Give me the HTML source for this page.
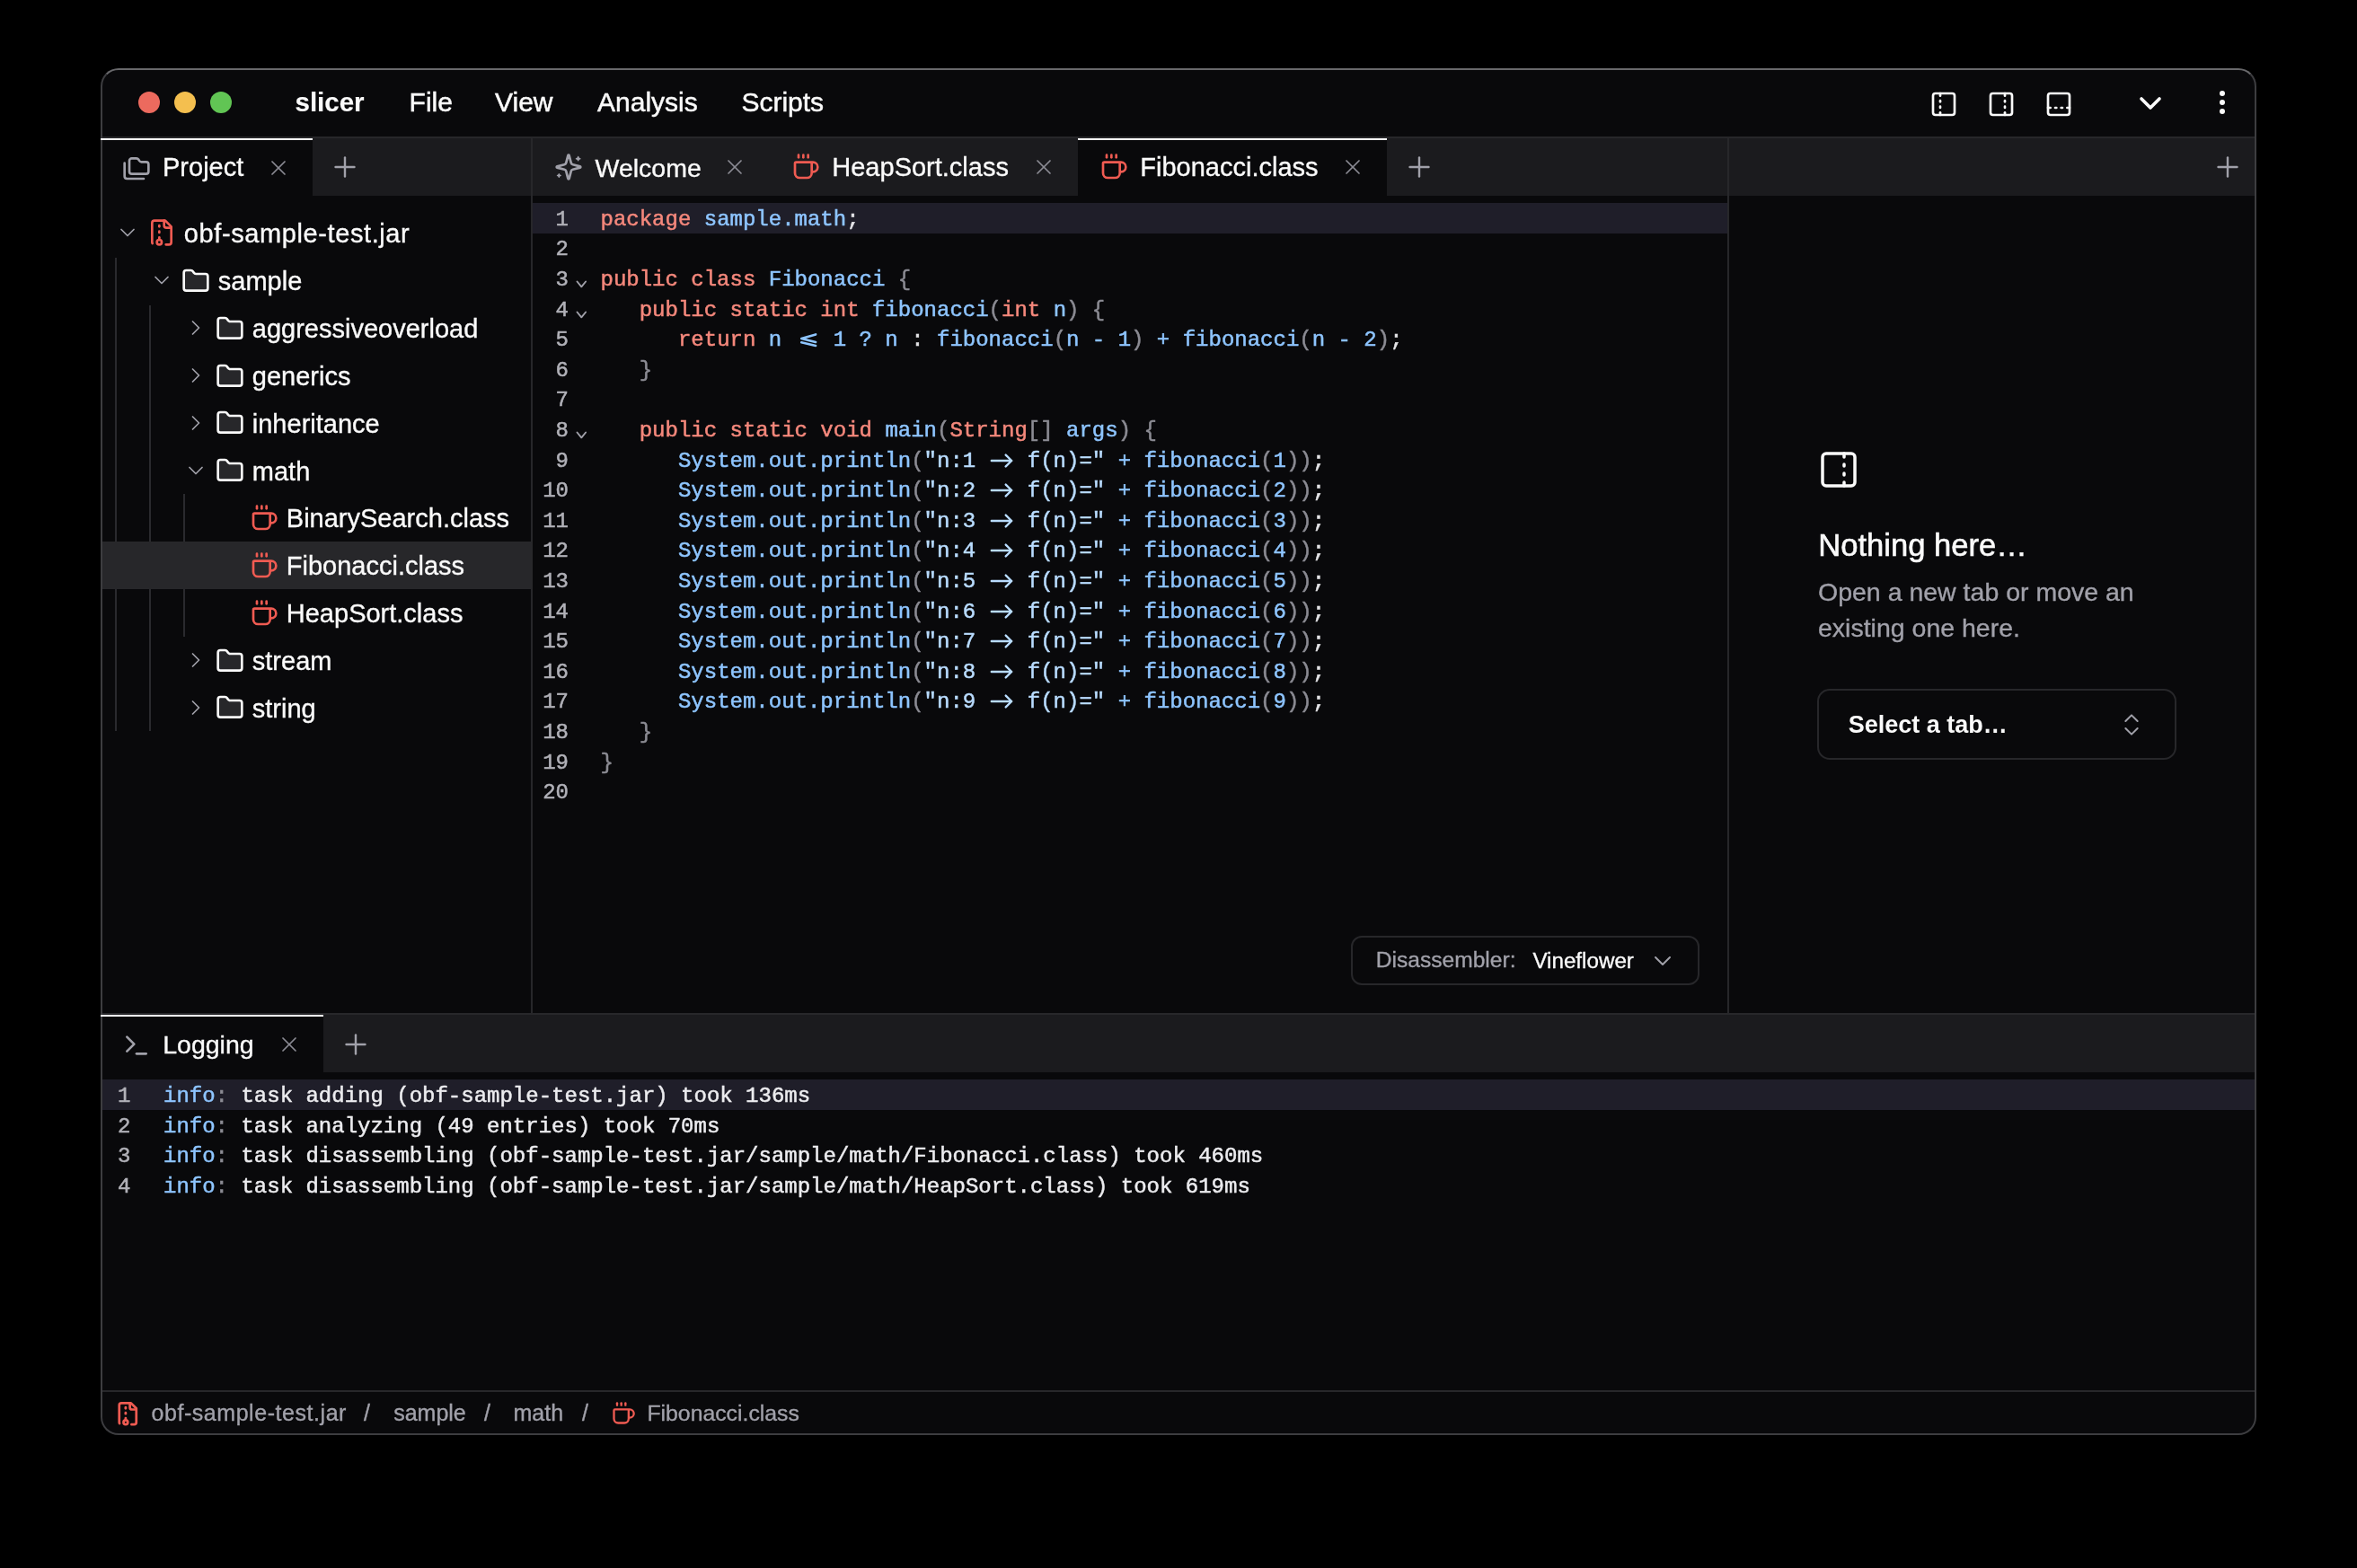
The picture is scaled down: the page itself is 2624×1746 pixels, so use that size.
<!DOCTYPE html><html><head><meta charset="utf-8"><title>slicer</title><style>
*{margin:0;padding:0}
html,body{width:2624px;height:1746px;background:#000;overflow:hidden}
body{position:relative;font-family:"Liberation Sans",sans-serif}
#root{position:absolute;left:0;top:0;width:2624px;height:1746px;will-change:transform}
.r,.t,.m,.ic{position:absolute}
.t{line-height:1;white-space:pre;-webkit-text-stroke-width:0.35px}
.m{font-family:"Liberation Mono",monospace;font-size:24px;line-height:33.6px;height:33.6px;white-space:pre;padding-top:1.8px;box-sizing:border-box;-webkit-text-stroke-width:0.5px}
.lig{display:inline-block;width:28.8px;text-align:center}
</style></head><body><div id="root"><div class="r" style="left:112px;top:76px;width:2400px;height:1522px;border-radius:20px;background:#09090b;box-sizing:border-box;border:2px solid #3d3d40;border-top-color:#68686b"></div><div class="r" style="left:154px;top:102px;width:24px;height:24px;background:#ec6a5e;border-radius:50%"></div><div class="r" style="left:194px;top:102px;width:24px;height:24px;background:#f4bf4f;border-radius:50%"></div><div class="r" style="left:234px;top:102px;width:24px;height:24px;background:#61c554;border-radius:50%"></div><div class="t" style="left:328.50px;top:99.33px;font-size:29.5px;color:#fafafa;font-weight:700;-webkit-text-stroke-width:0.15px">slicer</div><div class="t" style="left:455.60px;top:98.91px;font-size:30px;color:#fafafa;font-weight:400;-webkit-text-stroke:0.5px #fafafa">File</div><div class="t" style="left:551.00px;top:98.91px;font-size:30px;color:#fafafa;font-weight:400;-webkit-text-stroke:0.5px #fafafa">View</div><div class="t" style="left:665.00px;top:98.91px;font-size:30px;color:#fafafa;font-weight:400;-webkit-text-stroke:0.5px #fafafa">Analysis</div><div class="t" style="left:825.40px;top:98.91px;font-size:30px;color:#fafafa;font-weight:400;-webkit-text-stroke:0.5px #fafafa">Scripts</div><svg class="ic" style="left:2148.00px;top:99.80px;width:32px;height:32px;color:#fafafa" viewBox="0 0 24 24" fill="none" stroke="currentColor" stroke-width="2" stroke-linecap="round" stroke-linejoin="round"><rect width="18" height="18" x="3" y="3" rx="2"/><path d="M9 14v1"/><path d="M9 19v2"/><path d="M9 3v2"/><path d="M9 9v1"/></svg><svg class="ic" style="left:2211.90px;top:99.80px;width:32px;height:32px;color:#fafafa" viewBox="0 0 24 24" fill="none" stroke="currentColor" stroke-width="2" stroke-linecap="round" stroke-linejoin="round"><rect width="18" height="18" x="3" y="3" rx="2"/><path d="M15 14v1"/><path d="M15 19v2"/><path d="M15 3v2"/><path d="M15 9v1"/></svg><svg class="ic" style="left:2275.80px;top:99.80px;width:32px;height:32px;color:#fafafa" viewBox="0 0 24 24" fill="none" stroke="currentColor" stroke-width="2" stroke-linecap="round" stroke-linejoin="round"><rect width="18" height="18" x="3" y="3" rx="2"/><path d="M14 15h1"/><path d="M19 15h2"/><path d="M3 15h2"/><path d="M9 15h1"/></svg><svg class="ic" style="left:2373.80px;top:94.60px;width:40px;height:40px;color:#fafafa" viewBox="0 0 24 24" fill="none" stroke="currentColor" stroke-width="2.2" stroke-linecap="round" stroke-linejoin="round"><path d="m6 9 6 6 6-6"/></svg><div class="r" style="left:2470.75px;top:100.75px;width:6.5px;height:6.5px;background:#fafafa;border-radius:50%"></div><div class="r" style="left:2470.75px;top:110.75px;width:6.5px;height:6.5px;background:#fafafa;border-radius:50%"></div><div class="r" style="left:2470.75px;top:120.75px;width:6.5px;height:6.5px;background:#fafafa;border-radius:50%"></div><div class="r" style="left:114px;top:152px;width:2396px;height:2px;background:#27272a;"></div><div class="r" style="left:114px;top:154px;width:2396px;height:64px;background:#1b1b1e;"></div><div class="r" style="left:114px;top:1128px;width:2396px;height:2px;background:#27272a;"></div><div class="r" style="left:114px;top:1130px;width:2396px;height:64px;background:#1b1b1e;"></div><div class="r" style="left:114px;top:1548px;width:2396px;height:2px;background:#27272a;"></div><div class="r" style="left:114px;top:154px;width:234px;height:64px;background:#09090b;"></div><div class="r" style="left:112px;top:154px;width:236px;height:2px;background:#fafafa;"></div><div class="r" style="left:1200px;top:154px;width:344.4px;height:64px;background:#09090b;"></div><div class="r" style="left:1200px;top:154px;width:344.4px;height:2px;background:#fafafa;"></div><div class="r" style="left:114px;top:1130px;width:246px;height:64px;background:#09090b;"></div><div class="r" style="left:112px;top:1130px;width:248px;height:2px;background:#fafafa;"></div><div class="r" style="left:591px;top:152px;width:2px;height:976px;background:#27272a;"></div><div class="r" style="left:1923px;top:152px;width:2px;height:976px;background:#27272a;"></div><svg class="ic" style="left:135.95px;top:170.90px;width:32px;height:32px;color:#a1a1aa" viewBox="0 0 24 24" fill="none" stroke="currentColor" stroke-width="2" stroke-linecap="round" stroke-linejoin="round"><path d="M20 17a2 2 0 0 0 2-2V9a2 2 0 0 0-2-2h-3.9a2 2 0 0 1-1.69-.9l-.81-1.2a2 2 0 0 0-1.67-.9H8a2 2 0 0 0-2 2v9a2 2 0 0 0 2 2Z"/><path d="M2 8v11a2 2 0 0 0 2 2h14"/></svg><div class="t" style="left:181.00px;top:172.35px;font-size:29px;color:#fafafa;font-weight:400;">Project</div><svg class="ic" style="left:296.00px;top:172.70px;width:28px;height:28px;color:#8b8b93" viewBox="0 0 24 24" fill="none" stroke="currentColor" stroke-width="1.5" stroke-linecap="round" stroke-linejoin="round"><path d="M18 6 6 18"/><path d="m6 6 12 12"/></svg><svg class="ic" style="left:366.00px;top:168.00px;width:36px;height:36px;color:#a1a1aa" viewBox="0 0 24 24" fill="none" stroke="currentColor" stroke-width="1.6" stroke-linecap="round" stroke-linejoin="round"><path d="M5 12h14"/><path d="M12 5v14"/></svg><svg class="ic" style="left:617.10px;top:170.00px;width:32px;height:32px;color:#a1a1aa" viewBox="0 0 24 24" fill="none" stroke="currentColor" stroke-width="2" stroke-linecap="round" stroke-linejoin="round"><path d="M9.937 15.5A2 2 0 0 0 8.5 14.063l-6.135-1.582a.5.5 0 0 1 0-.962L8.5 9.936A2 2 0 0 0 9.937 8.5l1.582-6.135a.5.5 0 0 1 .963 0L14.063 8.5A2 2 0 0 0 15.5 9.937l6.135 1.581a.5.5 0 0 1 0 .964L15.5 14.063a2 2 0 0 0-1.437 1.437l-1.582 6.135a.5.5 0 0 1-.963 0z"/><path d="M20 3.2l.6 1.2 1.2.6-1.2.6-.6 1.2-.6-1.2-1.2-.6 1.2-.6z" fill="currentColor" stroke-width="0.8"/><path d="M4 17.6l.5 1 1 .5-1 .5-.5 1-.5-1-1-.5 1-.5z" fill="currentColor" stroke-width="0.8"/></svg><div class="t" style="left:662.50px;top:172.77px;font-size:28.5px;color:#fafafa;font-weight:400;">Welcome</div><svg class="ic" style="left:804.30px;top:172.00px;width:28px;height:28px;color:#8b8b93" viewBox="0 0 24 24" fill="none" stroke="currentColor" stroke-width="1.5" stroke-linecap="round" stroke-linejoin="round"><path d="M18 6 6 18"/><path d="m6 6 12 12"/></svg><svg class="ic" style="left:880.63px;top:170.17px;width:32px;height:32px;color:#ef5b52" viewBox="0 0 24 24" fill="none" stroke="currentColor" stroke-width="2" stroke-linecap="round" stroke-linejoin="round"><path d="M10 2v2"/><path d="M14 2v2"/><path d="M16 8a1 1 0 0 1 1 1v8a4 4 0 0 1-4 4H7a4 4 0 0 1-4-4V9a1 1 0 0 1 1-1h14a4 4 0 1 1 0 8h-1"/><path d="M6 2v2"/></svg><div class="t" style="left:926.30px;top:171.95px;font-size:29px;color:#fafafa;font-weight:400;">HeapSort.class</div><svg class="ic" style="left:1148.00px;top:171.70px;width:28px;height:28px;color:#8b8b93" viewBox="0 0 24 24" fill="none" stroke="currentColor" stroke-width="1.5" stroke-linecap="round" stroke-linejoin="round"><path d="M18 6 6 18"/><path d="m6 6 12 12"/></svg><svg class="ic" style="left:1223.73px;top:170.17px;width:32px;height:32px;color:#ef5b52" viewBox="0 0 24 24" fill="none" stroke="currentColor" stroke-width="2" stroke-linecap="round" stroke-linejoin="round"><path d="M10 2v2"/><path d="M14 2v2"/><path d="M16 8a1 1 0 0 1 1 1v8a4 4 0 0 1-4 4H7a4 4 0 0 1-4-4V9a1 1 0 0 1 1-1h14a4 4 0 1 1 0 8h-1"/><path d="M6 2v2"/></svg><div class="t" style="left:1269.30px;top:171.95px;font-size:29px;color:#fafafa;font-weight:400;">Fibonacci.class</div><svg class="ic" style="left:1492.00px;top:172.00px;width:28px;height:28px;color:#8b8b93" viewBox="0 0 24 24" fill="none" stroke="currentColor" stroke-width="1.5" stroke-linecap="round" stroke-linejoin="round"><path d="M18 6 6 18"/><path d="m6 6 12 12"/></svg><svg class="ic" style="left:1562.00px;top:168.00px;width:36px;height:36px;color:#a1a1aa" viewBox="0 0 24 24" fill="none" stroke="currentColor" stroke-width="1.6" stroke-linecap="round" stroke-linejoin="round"><path d="M5 12h14"/><path d="M12 5v14"/></svg><svg class="ic" style="left:2462.00px;top:168.00px;width:36px;height:36px;color:#a1a1aa" viewBox="0 0 24 24" fill="none" stroke="currentColor" stroke-width="1.6" stroke-linecap="round" stroke-linejoin="round"><path d="M5 12h14"/><path d="M12 5v14"/></svg><div class="r" style="left:127.6px;top:286.84000000000003px;width:2px;height:527.4px;background:#2a2a2e;"></div><div class="r" style="left:166px;top:339.68px;width:2px;height:474.56px;background:#2a2a2e;"></div><div class="r" style="left:204.2px;top:550.04px;width:2px;height:52.84000000000003px;background:#2a2a2e;"></div><div class="r" style="left:204.2px;top:655.72px;width:2px;height:52.84000000000003px;background:#2a2a2e;"></div><div class="r" style="left:114px;top:602.88px;width:477px;height:52.84px;background:#27272a;"></div><svg class="ic" style="left:128.00px;top:245.42px;width:28px;height:28px;color:#a1a1aa" viewBox="0 0 24 24" fill="none" stroke="currentColor" stroke-width="1.5" stroke-linecap="round" stroke-linejoin="round"><path d="m6 9 6 6 6-6"/></svg><svg class="ic" style="left:164.00px;top:243.42px;width:32px;height:32px;color:#ef5b52" viewBox="0 0 24 24" fill="none" stroke="currentColor" stroke-width="2" stroke-linecap="round" stroke-linejoin="round"><path d="M10 12v-1"/><path d="M10 18v-2"/><path d="M10 7V6"/><path d="M14 2v4a2 2 0 0 0 2 2h4"/><path d="M15.5 22H18a2 2 0 0 0 2-2V7l-5-5H6a2 2 0 0 0-2 2v16a2 2 0 0 0 .274 1.01"/><circle cx="10" cy="20" r="2"/></svg><div class="t" style="left:204.80px;top:246.45px;font-size:29px;color:#fafafa;font-weight:400;letter-spacing:0.6px">obf-sample-test.jar</div><svg class="ic" style="left:166.00px;top:298.26px;width:28px;height:28px;color:#a1a1aa" viewBox="0 0 24 24" fill="none" stroke="currentColor" stroke-width="1.5" stroke-linecap="round" stroke-linejoin="round"><path d="m6 9 6 6 6-6"/></svg><svg class="ic" style="left:201.95px;top:296.93px;width:32px;height:32px;color:#fafafa" viewBox="0 0 24 24" fill="none" stroke="currentColor" stroke-width="2" stroke-linecap="round" stroke-linejoin="round"><path fill="#27272a" d="M20 20a2 2 0 0 0 2-2V8a2 2 0 0 0-2-2h-7.9a2 2 0 0 1-1.69-.9L9.6 3.9A2 2 0 0 0 7.93 3H4a2 2 0 0 0-2 2v13a2 2 0 0 0 2 2Z"/></svg><div class="t" style="left:242.80px;top:299.29px;font-size:29px;color:#fafafa;font-weight:400;">sample</div><svg class="ic" style="left:204.00px;top:351.10px;width:28px;height:28px;color:#a1a1aa" viewBox="0 0 24 24" fill="none" stroke="currentColor" stroke-width="1.5" stroke-linecap="round" stroke-linejoin="round"><path d="m9 18 6-6-6-6"/></svg><svg class="ic" style="left:239.95px;top:349.77px;width:32px;height:32px;color:#fafafa" viewBox="0 0 24 24" fill="none" stroke="currentColor" stroke-width="2" stroke-linecap="round" stroke-linejoin="round"><path fill="#27272a" d="M20 20a2 2 0 0 0 2-2V8a2 2 0 0 0-2-2h-7.9a2 2 0 0 1-1.69-.9L9.6 3.9A2 2 0 0 0 7.93 3H4a2 2 0 0 0-2 2v13a2 2 0 0 0 2 2Z"/></svg><div class="t" style="left:280.80px;top:352.13px;font-size:29px;color:#fafafa;font-weight:400;">aggressiveoverload</div><svg class="ic" style="left:204.00px;top:403.94px;width:28px;height:28px;color:#a1a1aa" viewBox="0 0 24 24" fill="none" stroke="currentColor" stroke-width="1.5" stroke-linecap="round" stroke-linejoin="round"><path d="m9 18 6-6-6-6"/></svg><svg class="ic" style="left:239.95px;top:402.61px;width:32px;height:32px;color:#fafafa" viewBox="0 0 24 24" fill="none" stroke="currentColor" stroke-width="2" stroke-linecap="round" stroke-linejoin="round"><path fill="#27272a" d="M20 20a2 2 0 0 0 2-2V8a2 2 0 0 0-2-2h-7.9a2 2 0 0 1-1.69-.9L9.6 3.9A2 2 0 0 0 7.93 3H4a2 2 0 0 0-2 2v13a2 2 0 0 0 2 2Z"/></svg><div class="t" style="left:280.80px;top:404.97px;font-size:29px;color:#fafafa;font-weight:400;">generics</div><svg class="ic" style="left:204.00px;top:456.78px;width:28px;height:28px;color:#a1a1aa" viewBox="0 0 24 24" fill="none" stroke="currentColor" stroke-width="1.5" stroke-linecap="round" stroke-linejoin="round"><path d="m9 18 6-6-6-6"/></svg><svg class="ic" style="left:239.95px;top:455.45px;width:32px;height:32px;color:#fafafa" viewBox="0 0 24 24" fill="none" stroke="currentColor" stroke-width="2" stroke-linecap="round" stroke-linejoin="round"><path fill="#27272a" d="M20 20a2 2 0 0 0 2-2V8a2 2 0 0 0-2-2h-7.9a2 2 0 0 1-1.69-.9L9.6 3.9A2 2 0 0 0 7.93 3H4a2 2 0 0 0-2 2v13a2 2 0 0 0 2 2Z"/></svg><div class="t" style="left:280.80px;top:457.81px;font-size:29px;color:#fafafa;font-weight:400;">inheritance</div><svg class="ic" style="left:204.00px;top:509.62px;width:28px;height:28px;color:#a1a1aa" viewBox="0 0 24 24" fill="none" stroke="currentColor" stroke-width="1.5" stroke-linecap="round" stroke-linejoin="round"><path d="m6 9 6 6 6-6"/></svg><svg class="ic" style="left:239.95px;top:508.29px;width:32px;height:32px;color:#fafafa" viewBox="0 0 24 24" fill="none" stroke="currentColor" stroke-width="2" stroke-linecap="round" stroke-linejoin="round"><path fill="#27272a" d="M20 20a2 2 0 0 0 2-2V8a2 2 0 0 0-2-2h-7.9a2 2 0 0 1-1.69-.9L9.6 3.9A2 2 0 0 0 7.93 3H4a2 2 0 0 0-2 2v13a2 2 0 0 0 2 2Z"/></svg><div class="t" style="left:280.80px;top:510.65px;font-size:29px;color:#fafafa;font-weight:400;">math</div><svg class="ic" style="left:278.33px;top:561.13px;width:32px;height:32px;color:#ef5b52" viewBox="0 0 24 24" fill="none" stroke="currentColor" stroke-width="2" stroke-linecap="round" stroke-linejoin="round"><path d="M10 2v2"/><path d="M14 2v2"/><path d="M16 8a1 1 0 0 1 1 1v8a4 4 0 0 1-4 4H7a4 4 0 0 1-4-4V9a1 1 0 0 1 1-1h14a4 4 0 1 1 0 8h-1"/><path d="M6 2v2"/></svg><div class="t" style="left:318.80px;top:563.49px;font-size:29px;color:#fafafa;font-weight:400;">BinarySearch.class</div><svg class="ic" style="left:278.33px;top:613.97px;width:32px;height:32px;color:#ef5b52" viewBox="0 0 24 24" fill="none" stroke="currentColor" stroke-width="2" stroke-linecap="round" stroke-linejoin="round"><path d="M10 2v2"/><path d="M14 2v2"/><path d="M16 8a1 1 0 0 1 1 1v8a4 4 0 0 1-4 4H7a4 4 0 0 1-4-4V9a1 1 0 0 1 1-1h14a4 4 0 1 1 0 8h-1"/><path d="M6 2v2"/></svg><div class="t" style="left:318.80px;top:616.33px;font-size:29px;color:#fafafa;font-weight:400;">Fibonacci.class</div><svg class="ic" style="left:278.33px;top:666.81px;width:32px;height:32px;color:#ef5b52" viewBox="0 0 24 24" fill="none" stroke="currentColor" stroke-width="2" stroke-linecap="round" stroke-linejoin="round"><path d="M10 2v2"/><path d="M14 2v2"/><path d="M16 8a1 1 0 0 1 1 1v8a4 4 0 0 1-4 4H7a4 4 0 0 1-4-4V9a1 1 0 0 1 1-1h14a4 4 0 1 1 0 8h-1"/><path d="M6 2v2"/></svg><div class="t" style="left:318.80px;top:669.17px;font-size:29px;color:#fafafa;font-weight:400;">HeapSort.class</div><svg class="ic" style="left:204.00px;top:720.98px;width:28px;height:28px;color:#a1a1aa" viewBox="0 0 24 24" fill="none" stroke="currentColor" stroke-width="1.5" stroke-linecap="round" stroke-linejoin="round"><path d="m9 18 6-6-6-6"/></svg><svg class="ic" style="left:239.95px;top:719.65px;width:32px;height:32px;color:#fafafa" viewBox="0 0 24 24" fill="none" stroke="currentColor" stroke-width="2" stroke-linecap="round" stroke-linejoin="round"><path fill="#27272a" d="M20 20a2 2 0 0 0 2-2V8a2 2 0 0 0-2-2h-7.9a2 2 0 0 1-1.69-.9L9.6 3.9A2 2 0 0 0 7.93 3H4a2 2 0 0 0-2 2v13a2 2 0 0 0 2 2Z"/></svg><div class="t" style="left:280.80px;top:722.01px;font-size:29px;color:#fafafa;font-weight:400;">stream</div><svg class="ic" style="left:204.00px;top:773.82px;width:28px;height:28px;color:#a1a1aa" viewBox="0 0 24 24" fill="none" stroke="currentColor" stroke-width="1.5" stroke-linecap="round" stroke-linejoin="round"><path d="m9 18 6-6-6-6"/></svg><svg class="ic" style="left:239.95px;top:772.49px;width:32px;height:32px;color:#fafafa" viewBox="0 0 24 24" fill="none" stroke="currentColor" stroke-width="2" stroke-linecap="round" stroke-linejoin="round"><path fill="#27272a" d="M20 20a2 2 0 0 0 2-2V8a2 2 0 0 0-2-2h-7.9a2 2 0 0 1-1.69-.9L9.6 3.9A2 2 0 0 0 7.93 3H4a2 2 0 0 0-2 2v13a2 2 0 0 0 2 2Z"/></svg><div class="t" style="left:280.80px;top:774.85px;font-size:29px;color:#fafafa;font-weight:400;">string</div><div class="r" style="left:593px;top:226px;width:1330px;height:33.6px;background:#1f1e29;"></div><div class="m" style="left:560px;top:226.00px;width:73px;text-align:right;color:#b1b1b8">1</div><div class="m" style="left:668.5px;top:226.00px"><span style="color:#f5887c">package</span> <span style="color:#8ec5ff">sample.math</span><span style="color:#e4e4e7">;</span></div><div class="m" style="left:560px;top:259.60px;width:73px;text-align:right;color:#b1b1b8">2</div><div class="m" style="left:560px;top:293.20px;width:73px;text-align:right;color:#b1b1b8">3</div><div class="m" style="left:668.5px;top:293.20px"><span style="color:#f5887c">public class</span> <span style="color:#8ec5ff">Fibonacci</span> <span style="color:#8b8b93">{</span></div><div class="m" style="left:560px;top:326.80px;width:73px;text-align:right;color:#b1b1b8">4</div><div class="m" style="left:668.5px;top:326.80px">   <span style="color:#f5887c">public static int</span> <span style="color:#8ec5ff">fibonacci</span><span style="color:#8b8b93">(</span><span style="color:#f5887c">int</span> <span style="color:#8ec5ff">n</span><span style="color:#8b8b93">)</span> <span style="color:#8b8b93">{</span></div><div class="m" style="left:560px;top:360.40px;width:73px;text-align:right;color:#b1b1b8">5</div><div class="m" style="left:668.5px;top:360.40px">      <span style="color:#f5887c">return</span> <span style="color:#8ec5ff">n <span class="lig"><svg width="28.8" height="20" viewBox="0 0 28.8 20" style="vertical-align:-2px"><path d="M23.1 5.4 7.2 9.9 23.1 13.9M7.2 14.2 23.1 18" fill="none" stroke="currentColor" stroke-width="2.6" stroke-linecap="round" stroke-linejoin="round"/></svg></span> 1 ? n</span> <span style="color:#e4e4e7">:</span> <span style="color:#8ec5ff">fibonacci</span><span style="color:#8b8b93">(</span><span style="color:#8ec5ff">n - 1</span><span style="color:#8b8b93">)</span> <span style="color:#8ec5ff">+</span> <span style="color:#8ec5ff">fibonacci</span><span style="color:#8b8b93">(</span><span style="color:#8ec5ff">n - 2</span><span style="color:#8b8b93">)</span><span style="color:#e4e4e7">;</span></div><div class="m" style="left:560px;top:394.00px;width:73px;text-align:right;color:#b1b1b8">6</div><div class="m" style="left:668.5px;top:394.00px">   <span style="color:#8b8b93">}</span></div><div class="m" style="left:560px;top:427.60px;width:73px;text-align:right;color:#b1b1b8">7</div><div class="m" style="left:560px;top:461.20px;width:73px;text-align:right;color:#b1b1b8">8</div><div class="m" style="left:668.5px;top:461.20px">   <span style="color:#f5887c">public static void</span> <span style="color:#8ec5ff">main</span><span style="color:#8b8b93">(</span><span style="color:#f5887c">String</span><span style="color:#8b8b93">[]</span> <span style="color:#8ec5ff">args</span><span style="color:#8b8b93">)</span> <span style="color:#8b8b93">{</span></div><div class="m" style="left:560px;top:494.80px;width:73px;text-align:right;color:#b1b1b8">9</div><div class="m" style="left:668.5px;top:494.80px">      <span style="color:#8ec5ff">System.out.println</span><span style="color:#8b8b93">(</span><span style="color:#b9dcff">"n:1 <span class="lig"><svg width="28.8" height="20" viewBox="0 0 28.8 20" style="vertical-align:-3px"><path d="M2.8 10h22.4M18.7 3.6 25.2 10l-6.5 6.4" fill="none" stroke="currentColor" stroke-width="2.4" stroke-linecap="round" stroke-linejoin="round"/></svg></span> f(n)="</span> <span style="color:#8ec5ff">+</span> <span style="color:#8ec5ff">fibonacci</span><span style="color:#8b8b93">(</span><span style="color:#8ec5ff">1</span><span style="color:#8b8b93">))</span><span style="color:#e4e4e7">;</span></div><div class="m" style="left:560px;top:528.40px;width:73px;text-align:right;color:#b1b1b8">10</div><div class="m" style="left:668.5px;top:528.40px">      <span style="color:#8ec5ff">System.out.println</span><span style="color:#8b8b93">(</span><span style="color:#b9dcff">"n:2 <span class="lig"><svg width="28.8" height="20" viewBox="0 0 28.8 20" style="vertical-align:-3px"><path d="M2.8 10h22.4M18.7 3.6 25.2 10l-6.5 6.4" fill="none" stroke="currentColor" stroke-width="2.4" stroke-linecap="round" stroke-linejoin="round"/></svg></span> f(n)="</span> <span style="color:#8ec5ff">+</span> <span style="color:#8ec5ff">fibonacci</span><span style="color:#8b8b93">(</span><span style="color:#8ec5ff">2</span><span style="color:#8b8b93">))</span><span style="color:#e4e4e7">;</span></div><div class="m" style="left:560px;top:562.00px;width:73px;text-align:right;color:#b1b1b8">11</div><div class="m" style="left:668.5px;top:562.00px">      <span style="color:#8ec5ff">System.out.println</span><span style="color:#8b8b93">(</span><span style="color:#b9dcff">"n:3 <span class="lig"><svg width="28.8" height="20" viewBox="0 0 28.8 20" style="vertical-align:-3px"><path d="M2.8 10h22.4M18.7 3.6 25.2 10l-6.5 6.4" fill="none" stroke="currentColor" stroke-width="2.4" stroke-linecap="round" stroke-linejoin="round"/></svg></span> f(n)="</span> <span style="color:#8ec5ff">+</span> <span style="color:#8ec5ff">fibonacci</span><span style="color:#8b8b93">(</span><span style="color:#8ec5ff">3</span><span style="color:#8b8b93">))</span><span style="color:#e4e4e7">;</span></div><div class="m" style="left:560px;top:595.60px;width:73px;text-align:right;color:#b1b1b8">12</div><div class="m" style="left:668.5px;top:595.60px">      <span style="color:#8ec5ff">System.out.println</span><span style="color:#8b8b93">(</span><span style="color:#b9dcff">"n:4 <span class="lig"><svg width="28.8" height="20" viewBox="0 0 28.8 20" style="vertical-align:-3px"><path d="M2.8 10h22.4M18.7 3.6 25.2 10l-6.5 6.4" fill="none" stroke="currentColor" stroke-width="2.4" stroke-linecap="round" stroke-linejoin="round"/></svg></span> f(n)="</span> <span style="color:#8ec5ff">+</span> <span style="color:#8ec5ff">fibonacci</span><span style="color:#8b8b93">(</span><span style="color:#8ec5ff">4</span><span style="color:#8b8b93">))</span><span style="color:#e4e4e7">;</span></div><div class="m" style="left:560px;top:629.20px;width:73px;text-align:right;color:#b1b1b8">13</div><div class="m" style="left:668.5px;top:629.20px">      <span style="color:#8ec5ff">System.out.println</span><span style="color:#8b8b93">(</span><span style="color:#b9dcff">"n:5 <span class="lig"><svg width="28.8" height="20" viewBox="0 0 28.8 20" style="vertical-align:-3px"><path d="M2.8 10h22.4M18.7 3.6 25.2 10l-6.5 6.4" fill="none" stroke="currentColor" stroke-width="2.4" stroke-linecap="round" stroke-linejoin="round"/></svg></span> f(n)="</span> <span style="color:#8ec5ff">+</span> <span style="color:#8ec5ff">fibonacci</span><span style="color:#8b8b93">(</span><span style="color:#8ec5ff">5</span><span style="color:#8b8b93">))</span><span style="color:#e4e4e7">;</span></div><div class="m" style="left:560px;top:662.80px;width:73px;text-align:right;color:#b1b1b8">14</div><div class="m" style="left:668.5px;top:662.80px">      <span style="color:#8ec5ff">System.out.println</span><span style="color:#8b8b93">(</span><span style="color:#b9dcff">"n:6 <span class="lig"><svg width="28.8" height="20" viewBox="0 0 28.8 20" style="vertical-align:-3px"><path d="M2.8 10h22.4M18.7 3.6 25.2 10l-6.5 6.4" fill="none" stroke="currentColor" stroke-width="2.4" stroke-linecap="round" stroke-linejoin="round"/></svg></span> f(n)="</span> <span style="color:#8ec5ff">+</span> <span style="color:#8ec5ff">fibonacci</span><span style="color:#8b8b93">(</span><span style="color:#8ec5ff">6</span><span style="color:#8b8b93">))</span><span style="color:#e4e4e7">;</span></div><div class="m" style="left:560px;top:696.40px;width:73px;text-align:right;color:#b1b1b8">15</div><div class="m" style="left:668.5px;top:696.40px">      <span style="color:#8ec5ff">System.out.println</span><span style="color:#8b8b93">(</span><span style="color:#b9dcff">"n:7 <span class="lig"><svg width="28.8" height="20" viewBox="0 0 28.8 20" style="vertical-align:-3px"><path d="M2.8 10h22.4M18.7 3.6 25.2 10l-6.5 6.4" fill="none" stroke="currentColor" stroke-width="2.4" stroke-linecap="round" stroke-linejoin="round"/></svg></span> f(n)="</span> <span style="color:#8ec5ff">+</span> <span style="color:#8ec5ff">fibonacci</span><span style="color:#8b8b93">(</span><span style="color:#8ec5ff">7</span><span style="color:#8b8b93">))</span><span style="color:#e4e4e7">;</span></div><div class="m" style="left:560px;top:730.00px;width:73px;text-align:right;color:#b1b1b8">16</div><div class="m" style="left:668.5px;top:730.00px">      <span style="color:#8ec5ff">System.out.println</span><span style="color:#8b8b93">(</span><span style="color:#b9dcff">"n:8 <span class="lig"><svg width="28.8" height="20" viewBox="0 0 28.8 20" style="vertical-align:-3px"><path d="M2.8 10h22.4M18.7 3.6 25.2 10l-6.5 6.4" fill="none" stroke="currentColor" stroke-width="2.4" stroke-linecap="round" stroke-linejoin="round"/></svg></span> f(n)="</span> <span style="color:#8ec5ff">+</span> <span style="color:#8ec5ff">fibonacci</span><span style="color:#8b8b93">(</span><span style="color:#8ec5ff">8</span><span style="color:#8b8b93">))</span><span style="color:#e4e4e7">;</span></div><div class="m" style="left:560px;top:763.60px;width:73px;text-align:right;color:#b1b1b8">17</div><div class="m" style="left:668.5px;top:763.60px">      <span style="color:#8ec5ff">System.out.println</span><span style="color:#8b8b93">(</span><span style="color:#b9dcff">"n:9 <span class="lig"><svg width="28.8" height="20" viewBox="0 0 28.8 20" style="vertical-align:-3px"><path d="M2.8 10h22.4M18.7 3.6 25.2 10l-6.5 6.4" fill="none" stroke="currentColor" stroke-width="2.4" stroke-linecap="round" stroke-linejoin="round"/></svg></span> f(n)="</span> <span style="color:#8ec5ff">+</span> <span style="color:#8ec5ff">fibonacci</span><span style="color:#8b8b93">(</span><span style="color:#8ec5ff">9</span><span style="color:#8b8b93">))</span><span style="color:#e4e4e7">;</span></div><div class="m" style="left:560px;top:797.20px;width:73px;text-align:right;color:#b1b1b8">18</div><div class="m" style="left:668.5px;top:797.20px">   <span style="color:#8b8b93">}</span></div><div class="m" style="left:560px;top:830.80px;width:73px;text-align:right;color:#b1b1b8">19</div><div class="m" style="left:668.5px;top:830.80px"><span style="color:#8b8b93">}</span></div><div class="m" style="left:560px;top:864.40px;width:73px;text-align:right;color:#b1b1b8">20</div><svg class="ic" style="left:640px;top:310.20px;width:15px;height:12px" viewBox="0 0 15 12"><path d="M2.5 3.5 7.3 9.3 12.1 3.5" fill="none" stroke="#a1a1aa" stroke-width="1.9" stroke-linecap="round" stroke-linejoin="round"/></svg><svg class="ic" style="left:640px;top:343.80px;width:15px;height:12px" viewBox="0 0 15 12"><path d="M2.5 3.5 7.3 9.3 12.1 3.5" fill="none" stroke="#a1a1aa" stroke-width="1.9" stroke-linecap="round" stroke-linejoin="round"/></svg><svg class="ic" style="left:640px;top:478.20px;width:15px;height:12px" viewBox="0 0 15 12"><path d="M2.5 3.5 7.3 9.3 12.1 3.5" fill="none" stroke="#a1a1aa" stroke-width="1.9" stroke-linecap="round" stroke-linejoin="round"/></svg><div class="r" style="left:1504.4px;top:1042.4px;width:388px;height:55.1px;box-sizing:border-box;border:2px solid #27272a;border-radius:12px;background:#09090b"></div><div class="t" style="left:1531.70px;top:1057.18px;font-size:24.6px;color:#a1a1aa;font-weight:400;">Disassembler:</div><div class="t" style="left:1706.40px;top:1057.51px;font-size:24.2px;color:#fafafa;font-weight:400;">Vineflower</div><svg class="ic" style="left:1835.00px;top:1054.00px;width:32px;height:32px;color:#a1a1aa" viewBox="0 0 24 24" fill="none" stroke="currentColor" stroke-width="1.5" stroke-linecap="round" stroke-linejoin="round"><path d="m6 9 6 6 6-6"/></svg><svg class="ic" style="left:2023.10px;top:498.90px;width:48px;height:48px;color:#fafafa" viewBox="0 0 24 24" fill="none" stroke="currentColor" stroke-width="1.75" stroke-linecap="round" stroke-linejoin="round"><rect width="18" height="18" x="3" y="3" rx="2"/><path d="M15 14v1"/><path d="M15 19v2"/><path d="M15 3v2"/><path d="M15 9v1"/></svg><div class="t" style="left:2024.20px;top:590.01px;font-size:34.6px;color:#fafafa;font-weight:400;-webkit-text-stroke:0.6px #fafafa">Nothing here&#8230;</div><div class="t" style="left:2024.00px;top:645.47px;font-size:28.5px;color:#a1a1aa;font-weight:400;">Open a new tab or move an</div><div class="t" style="left:2024.00px;top:685.07px;font-size:28.5px;color:#a1a1aa;font-weight:400;">existing one here.</div><div class="r" style="left:2023.4px;top:767.3px;width:399.3px;height:78.9px;box-sizing:border-box;border:2px solid #27272a;border-radius:14px"></div><div class="t" style="left:2057.80px;top:794.14px;font-size:27px;color:#fafafa;font-weight:700;-webkit-text-stroke-width:0">Select a tab&#8230;</div><svg class="ic" style="left:2357.00px;top:791.10px;width:32px;height:32px;color:#a1a1aa" viewBox="0 0 24 24" fill="none" stroke="currentColor" stroke-width="1.5" stroke-linecap="round" stroke-linejoin="round"><path d="m7 15 5 5 5-5"/><path d="m7 9 5-5 5 5"/></svg><svg class="ic" style="left:135.85px;top:1147.50px;width:32px;height:32px;color:#a1a1aa" viewBox="0 0 24 24" fill="none" stroke="currentColor" stroke-width="2" stroke-linecap="round" stroke-linejoin="round"><polyline points="4 17 10 11 4 5"/><line x1="12" x2="20" y1="19" y2="19"/></svg><div class="t" style="left:181.20px;top:1148.77px;font-size:28.5px;color:#fafafa;font-weight:400;">Logging</div><svg class="ic" style="left:308.00px;top:1149.40px;width:28px;height:28px;color:#8b8b93" viewBox="0 0 24 24" fill="none" stroke="currentColor" stroke-width="1.5" stroke-linecap="round" stroke-linejoin="round"><path d="M18 6 6 18"/><path d="m6 6 12 12"/></svg><svg class="ic" style="left:378.00px;top:1145.00px;width:36px;height:36px;color:#a1a1aa" viewBox="0 0 24 24" fill="none" stroke="currentColor" stroke-width="1.6" stroke-linecap="round" stroke-linejoin="round"><path d="M5 12h14"/><path d="M12 5v14"/></svg><div class="r" style="left:114px;top:1202.2px;width:2396px;height:33.6px;background:#1f1e29;"></div><div class="m" style="left:131px;top:1202.20px;color:#b1b1b8">1</div><div class="m" style="left:182px;top:1202.20px;color:#ececef"><span style="color:#8ec5ff">info</span><span style="color:#8b8b93">:</span> task adding (obf-sample-test.jar) took 136ms</div><div class="m" style="left:131px;top:1235.80px;color:#b1b1b8">2</div><div class="m" style="left:182px;top:1235.80px;color:#ececef"><span style="color:#8ec5ff">info</span><span style="color:#8b8b93">:</span> task analyzing (49 entries) took 70ms</div><div class="m" style="left:131px;top:1269.40px;color:#b1b1b8">3</div><div class="m" style="left:182px;top:1269.40px;color:#ececef"><span style="color:#8ec5ff">info</span><span style="color:#8b8b93">:</span> task disassembling (obf-sample-test.jar/sample/math/Fibonacci.class) took 460ms</div><div class="m" style="left:131px;top:1303.00px;color:#b1b1b8">4</div><div class="m" style="left:182px;top:1303.00px;color:#ececef"><span style="color:#8ec5ff">info</span><span style="color:#8b8b93">:</span> task disassembling (obf-sample-test.jar/sample/math/HeapSort.class) took 619ms</div><svg class="ic" style="left:127.85px;top:1559.85px;width:28.5px;height:28.5px;color:#ef5b52" viewBox="0 0 24 24" fill="none" stroke="currentColor" stroke-width="2.3" stroke-linecap="round" stroke-linejoin="round"><path d="M10 12v-1"/><path d="M10 18v-2"/><path d="M10 7V6"/><path d="M14 2v4a2 2 0 0 0 2 2h4"/><path d="M15.5 22H18a2 2 0 0 0 2-2V7l-5-5H6a2 2 0 0 0-2 2v16a2 2 0 0 0 .274 1.01"/><circle cx="10" cy="20" r="2"/></svg><div class="t" style="left:168.50px;top:1561.44px;font-size:25px;color:#a1a1aa;font-weight:400;letter-spacing:0.55px">obf-sample-test.jar</div><div class="t" style="left:405.00px;top:1561.44px;font-size:25px;color:#a1a1aa;font-weight:400;">/</div><div class="t" style="left:438.20px;top:1561.44px;font-size:25px;color:#a1a1aa;font-weight:400;">sample</div><div class="t" style="left:539.00px;top:1561.44px;font-size:25px;color:#a1a1aa;font-weight:400;">/</div><div class="t" style="left:571.50px;top:1561.44px;font-size:25px;color:#a1a1aa;font-weight:400;">math</div><div class="t" style="left:648.00px;top:1561.44px;font-size:25px;color:#a1a1aa;font-weight:400;">/</div><svg class="ic" style="left:679.92px;top:1560.08px;width:28px;height:28px;color:#ef5b52" viewBox="0 0 24 24" fill="none" stroke="currentColor" stroke-width="2" stroke-linecap="round" stroke-linejoin="round"><path d="M10 2v2"/><path d="M14 2v2"/><path d="M16 8a1 1 0 0 1 1 1v8a4 4 0 0 1-4 4H7a4 4 0 0 1-4-4V9a1 1 0 0 1 1-1h14a4 4 0 1 1 0 8h-1"/><path d="M6 2v2"/></svg><div class="t" style="left:720.40px;top:1561.61px;font-size:24.8px;color:#a1a1aa;font-weight:400;">Fibonacci.class</div></div></body></html>
